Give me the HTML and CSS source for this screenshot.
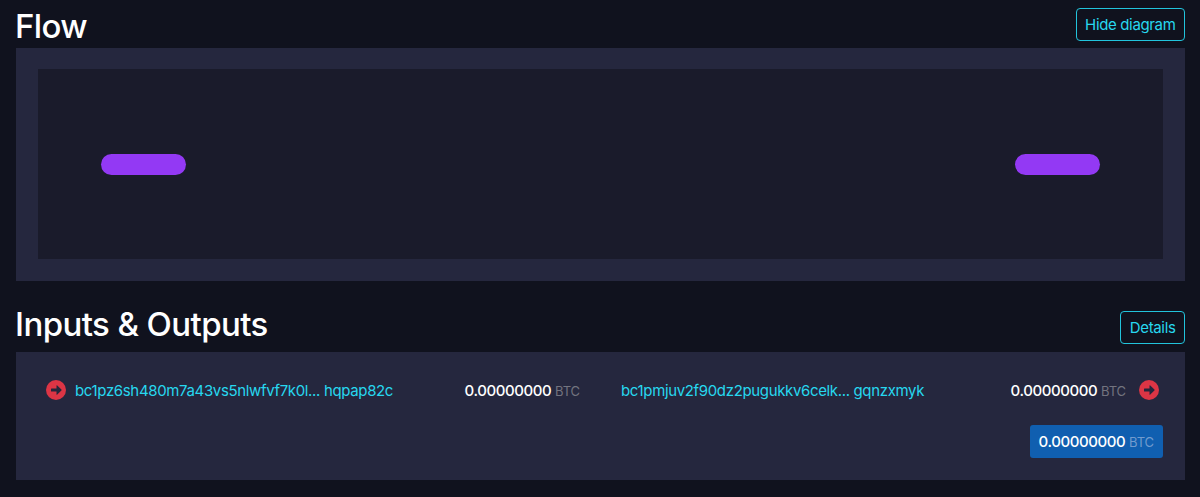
FILE: index.html
```html
<!DOCTYPE html>
<html lang="en">
<head>
    <meta charset="UTF-8">
    <meta name="viewport" content="width=device-width, initial-scale=1.0">
    <title>Transaction</title>
    <link rel="stylesheet" href="styles.css">
</head>
<body>
    <div class="title">
        <h2>Flow</h2>
        <button class="btn-outline">Hide diagram</button>
    </div>
    <div class="box flow-box">
        <div class="graph">
            <div class="node"></div>
            <div class="node"></div>
        </div>
    </div>

    <div class="title title-io">
        <h2>Inputs &amp; Outputs</h2>
        <button class="btn-outline">Details</button>
    </div>
    <div class="box io-box">
        <div class="row">
            <div class="side input">
                <svg class="arrow" viewBox="0 0 20 20"><circle cx="10" cy="10" r="10" fill="#dc3545"/><path d="M5.5 8.5h5V5.8q0-1 .8-.3l4.1 4q.5.5 0 1l-4.1 4q-.8.7-.8-.3v-2.7h-5q-.5 0-.5-.5V9q0-.5.5-.5z" fill="#24263c"/></svg>
                <a class="address" href="#">bc1pz6sh480m7a43vs5nlwfvf7k0l... hqpap82c</a>
                <span class="amount">0.00000000 <span class="symbol">BTC</span></span>
            </div>
            <div class="side output">
                <a class="address" href="#">bc1pmjuv2f90dz2pugukkv6celk... gqnzxmyk</a>
                <span class="amount">0.00000000 <span class="symbol">BTC</span></span>
                <svg class="arrow" viewBox="0 0 20 20"><circle cx="10" cy="10" r="10" fill="#dc3545"/><path d="M5.5 8.5h5V5.8q0-1 .8-.3l4.1 4q.5.5 0 1l-4.1 4q-.8.7-.8-.3v-2.7h-5q-.5 0-.5-.5V9q0-.5.5-.5z" fill="#24263c"/></svg>
            </div>
        </div>
        <div class="summary">
            <button class="btn-total">0.00000000 <span class="symbol">BTC</span></button>
        </div>
    </div>
</body>
</html>
```
FILE: styles.css
```css
* { box-sizing: border-box; }
body { margin: 0; padding: 8px 15px 0 16px; background: #10121e; color: #fff; font-family: Inter, sans-serif; font-size: 15px; letter-spacing: -0.35px; }
h2 { margin: 0 0 0 -1px; font-size: 33px; font-weight: 500; line-height: 36px; letter-spacing: -0.6px; }
.title { display: flex; justify-content: space-between; align-items: flex-start; height: 40px; }
.title-io { margin-top: 25px; height: 46px; }
.title-io .btn-outline { margin-top: 5px; }
.btn-outline { height: 33px; padding: 0 8.5px; border: 1px solid #22c4dc; border-radius: 4px; background: transparent; color: #27d8ef; font: inherit; letter-spacing: inherit; }
.box { background: #25273e; }
.flow-box { height: 233px; padding: 21px 22px 22px; }
.graph { display: flex; justify-content: space-between; align-items: center; height: 190px; padding: 0 63px; background: #1a1b2b; }
.node { width: 85px; height: 21px; border-radius: 11px; background: #9339f4; }
.io-box { height: 128px; padding: 22px 22px 0; }
.row { display: flex; height: 32px; }
.side { display: flex; align-items: center; white-space: nowrap; }
.input { width: 542px; padding-left: 8px; }
.output { flex: 1; padding-left: 41px; padding-right: 4px; }
.arrow { width: 20px; height: 20px; }
.input .arrow { margin-right: 9px; }
.output .arrow { margin-left: 13px; }
.address { color: #27d8ef; text-decoration: none; }
.amount { margin-left: auto; font-weight: 450; letter-spacing: -0.4px; }
.symbol { color: #73747f; font-size: 13px; font-weight: 400; letter-spacing: -0.1px; }
.summary { display: flex; justify-content: flex-end; margin-top: 19px; }
.btn-total { height: 33px; padding: 0 9px; border: 0; border-radius: 3px; background: #105fb0; color: #fff; font: inherit; font-weight: 450; letter-spacing: -0.4px; }
.btn-total .symbol { color: #719bce; }
```
